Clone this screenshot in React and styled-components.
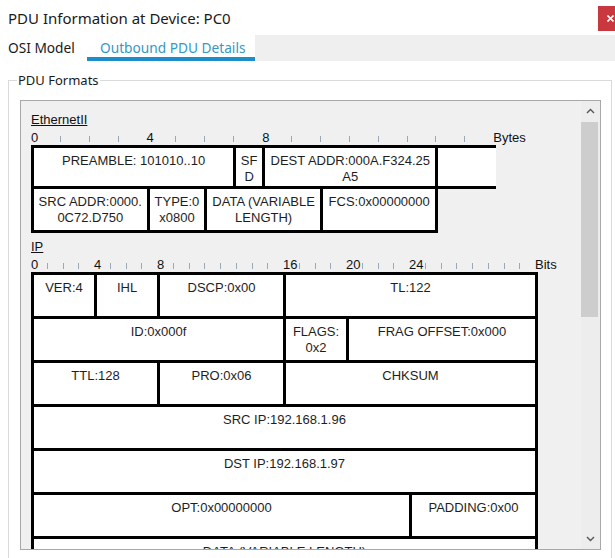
import React from "react";
import styled, { createGlobalStyle } from "styled-components";

const BYTE = 28.9;
const BIT = 15.75;

const ethernetCells = [
  { span: 7, lines: ["PREAMBLE: 101010..10"] },
  { span: 1, lines: ["SF", "D"] },
  { span: 6, lines: ["DEST ADDR:000A.F324.25", "A5"] },
  { span: 2, lines: [], open: true },
  { span: 4, lines: ["SRC ADDR:0000.", "0C72.D750"] },
  { span: 2, lines: ["TYPE:0", "x0800"] },
  { span: 4, lines: ["DATA (VARIABLE", "LENGTH)"] },
  { span: 4, lines: ["FCS:0x00000000"] },
];

const ipCells = [
  { span: 4, lines: ["VER:4"] },
  { span: 4, lines: ["IHL"] },
  { span: 8, lines: ["DSCP:0x00"] },
  { span: 16, lines: ["TL:122"] },
  { span: 16, lines: ["ID:0x000f"] },
  { span: 4, lines: ["FLAGS:", "0x2"] },
  { span: 12, lines: ["FRAG OFFSET:0x000"] },
  { span: 8, lines: ["TTL:128"] },
  { span: 8, lines: ["PRO:0x06"] },
  { span: 16, lines: ["CHKSUM"] },
  { span: 32, lines: ["SRC IP:192.168.1.96"] },
  { span: 32, lines: ["DST IP:192.168.1.97"] },
  { span: 24, lines: ["OPT:0x00000000"] },
  { span: 8, lines: ["PADDING:0x00"] },
  { span: 32, lines: ["DATA (VARIABLE LENGTH)"] },
];

export default function App() {
  return (
    <>
      <GlobalStyle />
      <Window>
        <TitleBar>
          <Title>PDU Information at Device: PC0</Title>
          <CloseButton>
            <svg width="7" height="7" viewBox="0 0 7 7">
              <path d="M0.5 0.5L6.5 6.5M6.5 0.5L0.5 6.5" stroke="#fff" strokeWidth="1.6" />
            </svg>
          </CloseButton>
        </TitleBar>

        <TabStrip>
          <Tab $width={87} $indent={8}>OSI Model</Tab>
          <Tab $width={168} $indent={13} $active>
            Outbound PDU Details
          </Tab>
          <TabFiller />
        </TabStrip>

        <GroupBox>
          <GroupLabel>PDU Formats</GroupLabel>
          <ScrollPanel>
            <ScrollContent>
              <Section
                title="EthernetII"
                unit={BYTE}
                count={16}
                labels={[0, 4, 8]}
                unitName="Bytes"
                rows="41px 44px"
                cells={ethernetCells}
              />
              <Section
                title="IP"
                gap={7}
                unit={BIT}
                count={32}
                labels={[0, 4, 8, 16, 20, 24]}
                unitName="Bits"
                rows="44px"
                cells={ipCells}
              />
            </ScrollContent>
            <ScrollBar>
              <ScrollArrow>
                <svg width="9" height="6" viewBox="0 0 9 6">
                  <polyline points="1,5 4.5,1.5 8,5" fill="none" stroke="#555" strokeWidth="1.4" />
                </svg>
              </ScrollArrow>
              <Thumb />
              <ScrollArrow $bottom>
                <svg width="9" height="6" viewBox="0 0 9 6">
                  <polyline points="1,1 4.5,4.5 8,1" fill="none" stroke="#555" strokeWidth="1.4" />
                </svg>
              </ScrollArrow>
            </ScrollBar>
          </ScrollPanel>
        </GroupBox>
      </Window>
    </>
  );
}

function Section({ title, gap = 0, unit, count, labels, unitName, rows, cells }) {
  const slots = Array.from({ length: count }, (_, i) => i);
  return (
    <>
      <SectionTitle $gap={gap}>{title}</SectionTitle>
      <Ruler $unit={unit} $count={count}>
        {slots.map((i) =>
          labels.includes(i) ? <span key={i}>{i}</span> : <Tick key={i} />
        )}
        <span>{unitName}</span>
      </Ruler>
      <FieldGrid $unit={unit} $count={count} $rows={rows}>
        {cells.map((cell, i) => (
          <Cell key={i} $span={cell.span} $open={cell.open}>
            {cell.lines.map((line, j) => (
              <div key={j}>{line}</div>
            ))}
          </Cell>
        ))}
      </FieldGrid>
    </>
  );
}

const GlobalStyle = createGlobalStyle`
  html, body {
    margin: 0;
    padding: 0;
    background: #fff;
  }
  body {
    width: 615px;
    height: 558px;
    overflow: hidden;
    font-family: "Noto Sans", "Open Sans", sans-serif;
  }
`;

const Window = styled.div`
  width: 615px;
  height: 558px;
  overflow: hidden;
  background: #fff;
`;

const TitleBar = styled.div`
  display: flex;
  justify-content: space-between;
  align-items: center;
  height: 35px;
  padding-left: 8px;
`;

const Title = styled.div`
  font-size: 15px;
  color: #1a1a1a;
`;

const CloseButton = styled.div`
  align-self: flex-start;
  margin-top: 6px;
  width: 17px;
  height: 25px;
  background: #c9383e;
  display: flex;
  align-items: center;
  padding-left: 9px;
  box-sizing: border-box;
`;

const TabStrip = styled.div`
  display: flex;
  height: 26px;
`;

const Tab = styled.div`
  width: ${(p) => p.$width}px;
  padding-left: ${(p) => p.$indent}px;
  box-sizing: border-box;
  font-size: 13.7px;
  line-height: 26px;
  white-space: nowrap;
  color: ${(p) => (p.$active ? "#3597c6" : "#1a1a1a")};
  box-shadow: ${(p) => (p.$active ? "inset 0 -4px 0 #1d8dcb" : "none")};
`;

const TabFiller = styled.div`
  flex: 1;
  background: #efefef;
`;

const GroupBox = styled.fieldset`
  margin: 10px 3px 0 8px;
  padding: 0 10px 0 11px;
  height: 490px;
  border: 1px solid #dadada;
`;

const GroupLabel = styled.legend`
  margin-left: -3px;
  padding: 0 1px;
  font-size: 13px;
  line-height: 18px;
  color: #1a1a1a;
`;

const ScrollPanel = styled.div`
  margin-top: 11px;
  width: 581px;
  height: 450px;
  box-sizing: border-box;
  border: 1px solid #a8a8a8;
  background: #f0f0f0;
  display: flex;
`;

const ScrollContent = styled.div`
  flex: 1;
  overflow: hidden;
  padding: 12px 0 0 10px;
`;

const ScrollBar = styled.div`
  width: 19px;
  display: flex;
  flex-direction: column;
  background: #ededed;
`;

const ScrollArrow = styled.div`
  height: 20px;
  margin-top: ${(p) => (p.$bottom ? "auto" : "0")};
  display: flex;
  align-items: center;
  justify-content: center;
  padding-right: 1px;
`;

const Thumb = styled.div`
  height: 195px;
  margin: 1px 2px 0 0;
  background: #cdcdcd;
`;

const SectionTitle = styled.div`
  margin-top: ${(p) => p.$gap}px;
  font: 13px/14px "Liberation Sans", Arial, sans-serif;
  color: #111;
  text-decoration: underline;
`;

const Ruler = styled.div`
  display: grid;
  grid-template-columns: repeat(${(p) => p.$count}, ${(p) => p.$unit}px) auto;
  height: 18px;
  align-items: end;
  font: 13px/14px "Liberation Sans", Arial, sans-serif;
  color: #111;
  white-space: nowrap;
`;

const Tick = styled.span`
  display: block;
  width: 1px;
  height: 6px;
  margin-bottom: 3px;
  background: #9aa8ba;
`;

const FieldGrid = styled.div`
  display: grid;
  grid-template-columns: repeat(${(p) => p.$count}, ${(p) => p.$unit}px);
  grid-auto-rows: 44px;
  grid-template-rows: ${(p) => p.$rows};
  padding-bottom: 3px;
  width: max-content;
`;

const Cell = styled.div`
  grid-column: span ${(p) => p.$span};
  margin: 0 -3px -3px 0;
  border: 3px solid #000;
  border-right-width: ${(p) => (p.$open ? 0 : 3)}px;
  background: #fff;
  padding-top: 5px;
  text-align: center;
  font: 13px/16px "Liberation Sans", Arial, sans-serif;
  color: #1e1e1e;
  white-space: nowrap;
  overflow: hidden;
`;
